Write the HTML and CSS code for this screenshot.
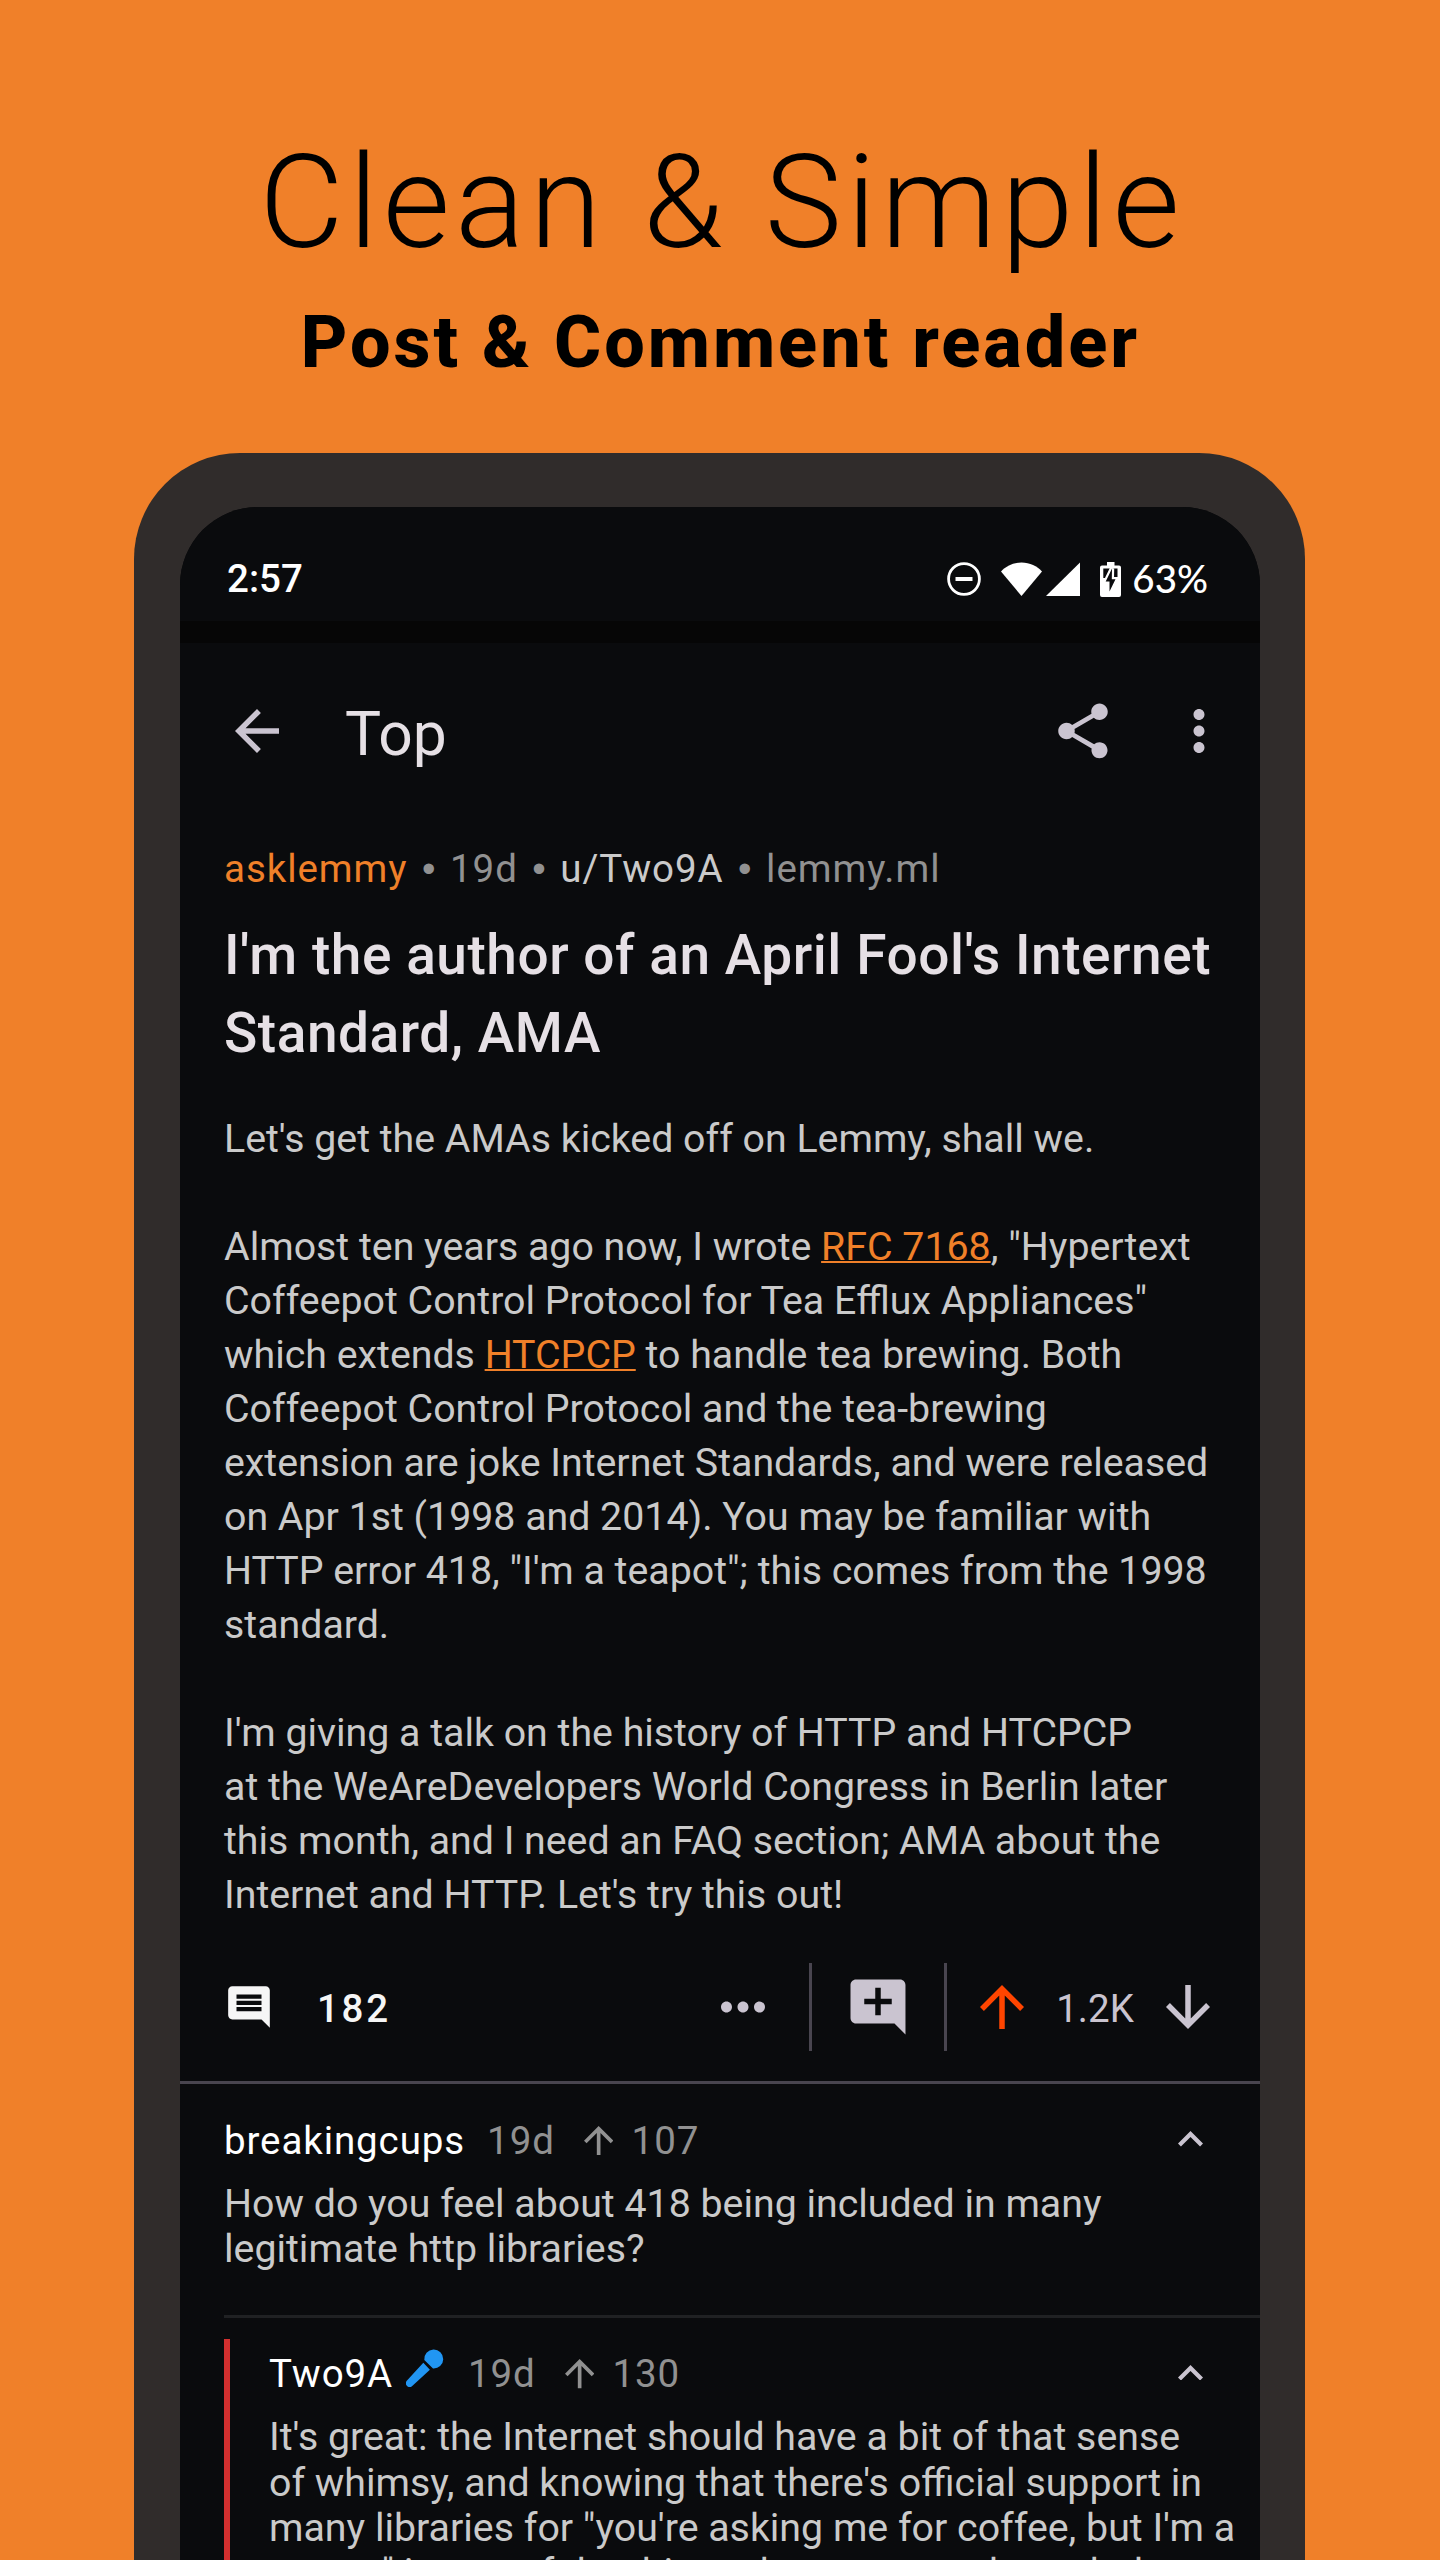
FILE: index.html
```html
<!DOCTYPE html>
<html lang="en">
<head>
<meta charset="utf-8">
<title>Clean &amp; Simple</title>
<link rel="stylesheet" href="styles.css">
</head>
<body>
<main class="poster">
  <h1 class="headline">Clean &amp; Simple</h1>
  <p class="tagline">Post &amp; Comment reader</p>
  <div class="phone">
    <div class="screen">
      <div class="statusbar">
        <span class="clock">2:57</span>
        <div class="status-icons">
          <svg class="dnd" width="34" height="34" viewBox="0 0 34 34"><circle cx="17" cy="17" r="15.4" fill="none" stroke="#fff" stroke-width="2.8"/><path d="M8.5 17h17" stroke="#fff" stroke-width="4"/></svg>
          <svg class="wifi" width="41" height="34" viewBox="0 0 41 34"><path d="M20.500 34L0 9.500C5 4 12 .5 20.500 .5S36 4 41 9.500z" fill="#fff"/></svg>
          <svg class="signal" width="34" height="34" viewBox="0 0 34 34"><path d="M34 .5V34H0z" fill="#fff"/></svg>
          <svg class="battery" width="21" height="35" viewBox="0 0 21 35"><path d="M7 0h7.500v3.500H19a2 2 0 0 1 2 2V33a2 2 0 0 1-2 2H2a2 2 0 0 1-2-2V5.500a2 2 0 0 1 2-2h5z" fill="#fff"/><path d="M3.300 6.500h14.200v9.500H3.300z" fill="#0a0b0d"/><path d="M12 6.500L5.700 19.500h3.800v10l6-12.300h-3.700z" fill="#0a0b0d" stroke="#fff" stroke-width="4.400" paint-order="stroke"/></svg>
          <span class="percent">63%</span>
        </div>
      </div>
      <div class="band"></div>
      <header class="appbar">
        <svg class="icon" viewBox="0 0 24 24"><path d="M20 11H7.830l5.590-5.590L12 4l-8 8 8 8 1.410-1.410L7.830 13H20v-2z"/></svg>
        <span class="appbar-title">Top</span>
        <svg class="icon" viewBox="0 0 24 24"><path d="M18 16.080c-.76 0-1.440.3-1.960.77L8.910 12.700c.05-.23.090-.46.090-.7s-.04-.47-.09-.7l7.050-4.110c.54.5 1.250.81 2.040.81 1.660 0 3-1.340 3-3s-1.340-3-3-3-3 1.340-3 3c0 .24.040.47.090.7L8.040 9.810C7.500 9.310 6.790 9 6 9c-1.660 0-3 1.340-3 3s1.340 3 3 3c.79 0 1.500-.31 2.040-.81l7.120 4.160c-.05.21-.08.430-.08.650 0 1.610 1.310 2.920 2.920 2.920s2.920-1.310 2.920-2.920-1.310-2.920-2.920-2.920z"/></svg>
        <svg class="icon more" viewBox="0 0 24 24"><path d="M12 8c1.100 0 2-.9 2-2s-.9-2-2-2-2 .9-2 2 .9 2 2 2zm0 2c-1.100 0-2 .9-2 2s.9 2 2 2 2-.9 2-2-.9-2-2-2zm0 6c-1.100 0-2 .9-2 2s.9 2 2 2 2-.9 2-2-.9-2-2-2z"/></svg>
      </header>
      <article class="post">
        <div class="meta"><span class="community">asklemmy</span><span class="sep">•</span><span>19d</span><span class="sep">•</span><span class="user">u/Two9A</span><span class="sep">•</span><span>lemmy.ml</span></div>
        <h2 class="title">I'm the author of an April Fool's Internet<br>Standard, AMA</h2>
        <div class="body">
          <p>Let's get the AMAs kicked off on Lemmy, shall we.</p>
          <p>Almost ten years ago now, I wrote <a>RFC 7168</a>, "Hypertext<br>Coffeepot Control Protocol for Tea Efflux Appliances"<br>which extends <a>HTCPCP</a> to handle tea brewing. Both<br>Coffeepot Control Protocol and the tea-brewing<br>extension are joke Internet Standards, and were released<br>on Apr 1st (1998 and 2014). You may be familiar with<br>HTTP error 418, "I'm a teapot"; this comes from the 1998<br>standard.</p>
          <p>I'm giving a talk on the history of HTTP and HTCPCP<br>at the WeAreDevelopers World Congress in Berlin later<br>this month, and I need an FAQ section; AMA about the<br>Internet and HTTP. Let's try this out!</p>
        </div>
      </article>
      <div class="actions">
        <svg class="icon-sm" viewBox="0 0 24 24"><path d="M21.990 4c0-1.100-.89-2-1.990-2H4c-1.100 0-2 .9-2 2v12c0 1.100.9 2 2 2h14l4 4-.01-18zM18 14H6v-2h12v2zm0-3H6V9h12v2zm0-3H6V6h12v2z"/></svg>
        <span class="count">182</span>
        <svg class="icon dots" viewBox="0 0 24 24"><path d="M6 10c-1.100 0-2 .9-2 2s.9 2 2 2 2-.9 2-2-.9-2-2-2zm12 0c-1.100 0-2 .9-2 2s.9 2 2 2 2-.9 2-2-.9-2-2-2zm-6 0c-1.100 0-2 .9-2 2s.9 2 2 2 2-.9 2-2-.9-2-2-2z"/></svg>
        <span class="vline"></span>
        <svg class="icon add" viewBox="0 0 24 24"><path d="M21.990 4c0-1.100-.89-2-1.990-2H4c-1.100 0-2 .9-2 2v12c0 1.100.9 2 2 2h14l4 4-.01-18zM17 11h-4v4h-2v-4H7V9h4V5h2v4h4v2z"/></svg>
        <span class="vline"></span>
        <svg class="icon up" viewBox="0 0 24 24"><path d="M4 12l1.410 1.410L11 7.830V20h2V7.830l5.580 5.590L20 12l-8-8-8 8z"/></svg>
        <span class="score">1.2K</span>
        <svg class="icon down" viewBox="0 0 24 24"><path d="M20 12l-1.410-1.410L13 16.170V4h-2v12.170l-5.580-5.590L4 12l8 8 8-8z"/></svg>
      </div>
      <section class="comment">
        <div class="comment-head">
          <span class="name">breakingcups</span>
          <span class="age">19d</span>
          <svg class="vote" viewBox="4 4 16 16"><path d="M4 12l1.410 1.410L11 7.830V20h2V7.830l5.580 5.590L20 12l-8-8-8 8z"/></svg>
          <span>107</span>
          <svg class="chevron" viewBox="6 8 12 7.410"><path d="M12 8l-6 6 1.410 1.410L12 10.830l4.590 4.580L18 14z"/></svg>
        </div>
        <p>How do you feel about 418 being included in many<br>legitimate http libraries?</p>
      </section>
      <section class="reply">
        <div class="thread">
          <div class="comment-head">
            <span class="name">Two9A</span>
            <svg class="mic" width="38" height="38" viewBox="0 0 38 38" fill="#2196f3"><path d="M18.300 11A9.500 9.500 0 1 1 27 19.500z"/><path d="M17.300 13.700l6.600 7L6.500 36.800a3.800 3.800 0 0 1-5.500-5.300z"/></svg>
            <span class="age">19d</span>
            <svg class="vote" viewBox="4 4 16 16"><path d="M4 12l1.410 1.410L11 7.830V20h2V7.830l5.580 5.590L20 12l-8-8-8 8z"/></svg>
            <span>130</span>
            <svg class="chevron" viewBox="6 8 12 7.410"><path d="M12 8l-6 6 1.410 1.410L12 10.830l4.590 4.580L18 14z"/></svg>
          </div>
          <p>It's great: the Internet should have a bit of that sense<br>of whimsy, and knowing that there's official support in<br>many libraries for "you're asking me for coffee, but I'm a<br>teapot" is one of the things that gets me through the</p>
        </div>
      </section>
    </div>
  </div>
</main>
</body>
</html>
```
FILE: styles.css
```css
* { box-sizing: border-box; margin: 0; padding: 0; }
body {
  width: 1440px;
  height: 2560px;
  overflow: hidden;
  font-family: Roboto, sans-serif;
  font-size: 39.3px;
  line-height: 45.1px;
  color: #cacaca;
}
.poster {
  height: 2560px;
  background: #f08029;
  overflow: hidden;
  display: flex;
  flex-direction: column;
  align-items: center;
  padding-top: 127px;
}
.headline { font-size: 130px; line-height: 152px; font-weight: 300; letter-spacing: 5px; padding-left: 4px; color: #000; white-space: nowrap; }
.tagline { font-size: 72px; line-height: 84px; font-weight: 800; letter-spacing: 3px; padding-left: 1px; color: #000; margin-top: 22px; white-space: nowrap; }
.phone {
  width: 1171px;
  height: 2200px;
  flex: none;
  margin: 68px 0 0 -1px;
  padding: 54px 45px 0 46px;
  background: #302c2b;
  border-radius: 106px 106px 0 0;
}
.screen {
  height: 2146px;
  background: #0a0b0d;
  border-radius: 78px 78px 0 0;
  overflow: hidden;
  white-space: nowrap;
}
.statusbar {
  height: 114px;
  padding: 30px 52px 0 47px;
  display: flex;
  align-items: center;
  justify-content: space-between;
  color: #fff;
  font-size: 38.5px;
  font-weight: 500;
  background: #0a0b0d;
}
.percent { font-family: Lato, sans-serif; font-weight: 500; margin-left: 11px; }
.status-icons { display: flex; align-items: center; }
.wifi { margin-left: 20px; }
.signal { margin-left: 4px; }
.battery { margin-left: 20px; }
.band { height: 22px; background: #060606; }
.icon { width: 66px; height: 66px; fill: #cac4d0; flex: none; display: block; }
.appbar { height: 176px; display: flex; align-items: center; padding: 0 28px 0 44px; }
.appbar-title { flex: 1; font-size: 60.5px; color: #e6e0e5; margin-left: 55px; padding-top: 8px; }
.more { margin-left: 50px; }
.post { padding: 27px 44px 0; }
.meta { display: flex; color: #919191; font-size: 38.5px; letter-spacing: .95px; }
.sep { width: 42.5px; text-align: center; font-family: "Liberation Sans", sans-serif; letter-spacing: 0; }
.community { color: #f08029; }
.user { color: #cacaca; }
.title { font-size: 55px; line-height: 78px; font-weight: 500; letter-spacing: .54px; color: #e6e0e5; margin-top: 25px; }
.body { line-height: 54px; margin-top: 40px; }
.body p + p { margin-top: 54px; }
.body a { color: #f08029; text-decoration: underline; text-decoration-thickness: 2px; }
.actions {
  height: 162px;
  padding: 10px 39px 0 44px;
  display: flex;
  align-items: center;
  border-bottom: 3px solid #49454f;
}
.icon-sm { width: 50px; height: 50px; fill: #f6f6f6; flex: none; }
.count { color: #f6f6f6; font-size: 38.5px; font-weight: 500; letter-spacing: 2.7px; margin-left: 43px; padding-top: 3px; }
.dots { margin-left: auto; margin-right: 33px; }
.vline { width: 3px; height: 88px; background: #49454f; }
.add { margin: 0 33px; }
.up { fill: #ff4500; margin-left: 22px; }
.score { width: 120px; text-align: center; color: #cac4d0; font-size: 38.5px; padding-top: 3px; }
.comment { padding: 34px 0 0 44px; }
.comment-head { display: flex; align-items: center; color: #919191; font-size: 38.5px; letter-spacing: .9px; padding-right: 57px; }
.comment p, .thread p { margin-top: 19px; }
.name { color: #fff; }
.age { margin-left: 22px; }
.mic { align-self: flex-start; margin: -2px 2px 0 13px; }
.vote { width: 29.3px; height: 29.3px; fill: #919191; margin: 0 18.5px 0 29px; }
.chevron { width: 25px; height: 15.5px; fill: #cac4d0; margin: 0 0 3px auto; }
.reply { margin: 43px 0 0 44px; padding-top: 21px; border-top: 3px solid #202123; }
.thread { border-left: 6px solid #d32f2f; padding: 12px 0 0 39px; height: 300px; }
```
